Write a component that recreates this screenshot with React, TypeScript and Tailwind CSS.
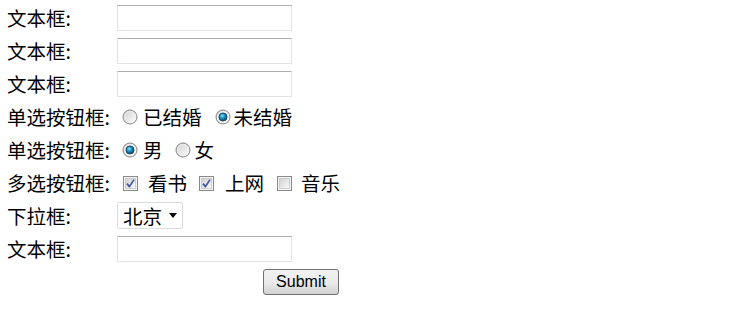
import React from "react";

const font = { fontFamily: '"Noto Sans CJK SC", sans-serif' };

function Radio({ checked = false }: { checked?: boolean }) {
  return (
    <svg width="16" height="16" viewBox="0 0 16 16" className="shrink-0">
      <defs>
        <linearGradient id="rbg" x1="0" y1="0" x2="1" y2="1">
          <stop offset="0" stopColor="#cfcfcf" />
          <stop offset="1" stopColor="#ffffff" />
        </linearGradient>
        <radialGradient id="rdot" cx="0.4" cy="0.35" r="0.7">
          <stop offset="0" stopColor="#8fe0ff" />
          <stop offset="0.45" stopColor="#1a8fc4" />
          <stop offset="1" stopColor="#0a3d5e" />
        </radialGradient>
      </defs>
      <circle cx="8" cy="8" r="7" fill="url(#rbg)" stroke="#858585" strokeWidth="1" />
      <circle cx="8" cy="8" r="5.4" fill="none" stroke="#f4f4f4" strokeWidth="0.8" />
      {checked && <circle cx="8" cy="8" r="4" fill="url(#rdot)" stroke="#173f57" strokeWidth="0.9" />}
    </svg>
  );
}

function Check({ checked = false }: { checked?: boolean }) {
  return (
    <svg width="16" height="16" viewBox="0 0 16 16" className="shrink-0">
      <defs>
        <linearGradient id="cbg" x1="0" y1="0" x2="1" y2="1">
          <stop offset="0" stopColor="#d0d0d0" />
          <stop offset="1" stopColor="#fbfbfb" />
        </linearGradient>
      </defs>
      <rect x="1.5" y="1.5" width="14" height="14" fill="#f5f5f5" stroke="#8a8a8a" />
      <rect x="3.5" y="3.5" width="10" height="10" fill="url(#cbg)" stroke="#c4c4c4" strokeWidth="0.8" />
      {checked && (
        <path d="M5 8.6 L7.4 11.6 L12 4.6" fill="none" stroke="#3d55a0" strokeWidth="1.7" strokeLinejoin="round" />
      )}
    </svg>
  );
}

function TextBox() {
  return (
    <input
      type="text"
      className="w-[175px] h-[26px] border border-[#e2e3ea] border-t-[#abadb3] bg-white outline-none"
    />
  );
}

function Row({ label, children }: { label: string; children?: React.ReactNode }) {
  return (
    <div className="flex items-center h-[33px]">
      <span className="w-[110px] shrink-0 whitespace-nowrap text-[19.5px] text-black leading-none">{label}</span>
      <div className="flex items-center">{children}</div>
    </div>
  );
}

const txt = "text-[19.5px] leading-none text-black";

export default function App() {
  return (
    <div className="bg-white w-[731px] h-[317px] pl-[7px] pt-[1px]" style={font}>
      <Row label="文本框:">
        <TextBox />
      </Row>
      <Row label="文本框:">
        <TextBox />
      </Row>
      <Row label="文本框:">
        <TextBox />
      </Row>
      <Row label="单选按钮框:">
        <span className="ml-[5px] flex items-center"><Radio /></span>
        <span className={`ml-[5px] ${txt}`}>已结婚</span>
        <span className="ml-[13px] flex items-center"><Radio checked /></span>
        <span className={`ml-[3px] ${txt}`}>未结婚</span>
      </Row>
      <Row label="单选按钮框:">
        <span className="ml-[5px] flex items-center"><Radio checked /></span>
        <span className={`ml-[5px] ${txt}`}>男</span>
        <span className="ml-[12px] flex items-center"><Radio /></span>
        <span className={`ml-[4px] ${txt}`}>女</span>
      </Row>
      <Row label="多选按钮框:">
        <span className="ml-[5px] flex items-center"><Check checked /></span>
        <span className={`ml-[10px] ${txt}`}>看书</span>
        <span className="ml-[11px] flex items-center"><Check checked /></span>
        <span className={`ml-[11px] ${txt}`}>上网</span>
        <span className="ml-[12px] flex items-center"><Check /></span>
        <span className={`ml-[9px] ${txt}`}>音乐</span>
      </Row>
      <Row label="下拉框:">
        <div className="w-[66px] h-[27px] border border-[#d9dde3] rounded-[2px] bg-white flex items-center pl-[5px]">
          <span className={txt}>北京</span>
          <span className="ml-[7px] w-0 h-0 border-l-[4px] border-r-[4px] border-t-[5px] border-l-transparent border-r-transparent border-t-black" />
        </div>
      </Row>
      <Row label="文本框:">
        <TextBox />
      </Row>
      <div className="flex items-center h-[33px]">
        <button
          className="ml-[256px] w-[76px] h-[26px] border border-[#707070] rounded-[3px] bg-gradient-to-b from-[#f2f2f2] via-[#ebebeb] to-[#d2d2d2] text-[16px] text-black leading-none"
          style={{ fontFamily: '"Liberation Sans", Arial, sans-serif' }}
        >
          Submit
        </button>
      </div>
    </div>
  );
}
